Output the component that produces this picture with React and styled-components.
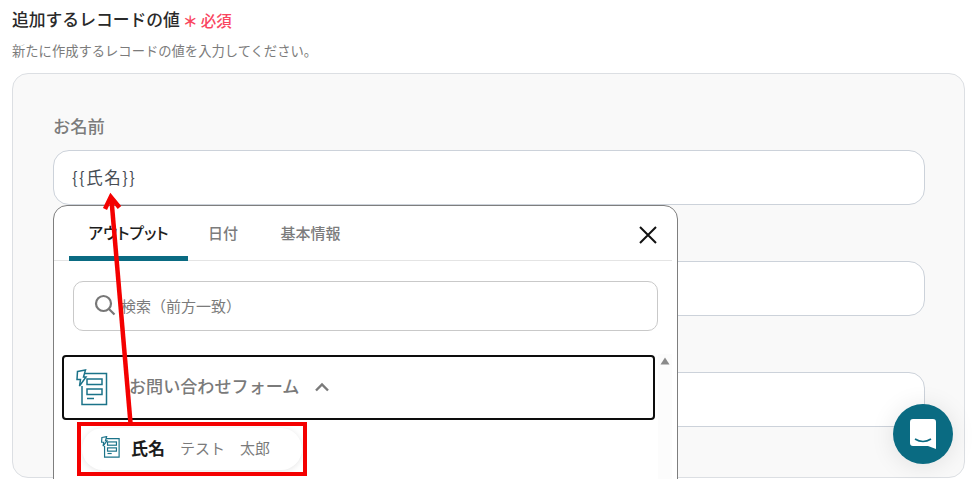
import React from "react";
import styled, { createGlobalStyle } from "styled-components";

const Global = createGlobalStyle`
  html, body { margin: 0; padding: 0; background: #fff; overflow: hidden; }
  body { font-family: "Noto Sans CJK JP", "Noto Sans", sans-serif; width: 972px; height: 479px; }
`;
const Page = styled.div`
  position: relative; width: 972px; height: 479px; overflow: hidden; padding: 0 7px 0 12px; box-sizing: border-box;
`;
const Heading = styled.div`
  display: flex; align-items: center; height: 24px; margin-top: 7px; gap: 3px;
`;
const Title = styled.h2`
  margin: 0; font-size: 16.8px; font-weight: 500; color: #2a2a2a; line-height: 24px;
`;
const Star = styled.span`
  color: #f9465f; font-size: 15px; line-height: 24px; font-weight: 700; margin-top: 3px;
`;
const Required = styled.span`
  color: #f9465f; font-size: 15.5px; font-weight: 500; margin-top: 1px;
`;
const Sub = styled.p`
  margin: 11px 0 0; font-size: 13.3px; line-height: 18px; color: #7b7b7b;
`;
const Card = styled.div`
  margin-top: 13px; height: 405px; box-sizing: border-box; background: #f9f9f9; border: 1px solid #dcdfe3; border-radius: 16px;
  padding: 41px 40px 0; display: flex; flex-direction: column; width: 953px;
`;
const Field = styled.div`
  display: flex; flex-direction: column; height: 111px;
`;
const Label = styled.label`
  font-size: 17.3px; font-weight: 500; color: #7c7c7c; line-height: 22px; height: 35px;
`;
const Input = styled.div`
  box-sizing: border-box; width: 872px; height: 55px; border: 1px solid #ccd2da; border-radius: 16px; background: #fff;
  padding: 0 18px 2px; display: flex; align-items: center; font-size: 16.5px; letter-spacing: 1.5px; color: #474d55;
`;
const Popup = styled.div`
  position: absolute; left: 53px; top: 205px; width: 625px; height: 290px; box-sizing: border-box; background: #fff;
  border: 1px solid #7e7e7e; border-radius: 14px; display: flex; flex-direction: column;
`;
const TabBar = styled.div`
  display: flex; align-items: stretch; height: 54px; margin: 0 5px 0 0; border-bottom: 1px solid #e4e4e4; padding-left: 15px; position: relative;
`;
const Tab = styled.div`
  width: ${p => p.$w}px; margin-right: ${p => p.$m}px; box-sizing: border-box; display: flex; justify-content: center; align-items: center;
  font-size: ${p => p.$active ? 15.8 : 15}px; font-weight: 500; padding-top: 3px; white-space: nowrap;
  font-feature-settings: "palt";
  color: ${p => p.$active ? "#1d1d1d" : "#7c7c7c"};
  border-bottom: 5px solid ${p => p.$active ? "#0a6b82" : "transparent"};
  border-radius: 4px 4px 0 0;
  margin-bottom: -1px;
`;
const Close = styled.button`
  position: absolute; right: 14px; top: 19px; width: 20px; height: 20px; padding: 0; border: 0; background: none; display: flex;
`;
const Search = styled.div`
  box-sizing: border-box; margin: 20px 0 0 19px; width: 585px; height: 50px; border: 1px solid #c9c9c9; border-radius: 10px;
  display: flex; align-items: center; padding: 0 0 2px 20px; gap: 5px; font-size: 15px; color: #7b7b7b;
`;
const ListArea = styled.div`
  position: relative; margin-top: 24px; padding-left: 8px; flex: 1;
`;
const Group = styled.div`
  box-sizing: border-box; width: 593px; height: 65px; border: 2px solid #0d0d0d; border-radius: 4px; display: flex; align-items: center;
  padding-left: 12px; font-size: 17.1px; font-weight: 500; color: #7a7a7a;
`;
const GroupText = styled.span` margin: 0 15px 4px 21px; `;
const Chevron = styled.svg` margin-bottom: 2px; `;
const Track = styled.div`
  position: absolute; right: 5px; top: -1px; width: 14px; bottom: 0; background: #fcfcfc; display: flex; justify-content: center; padding-top: 3px;
`;
const Item = styled.div`
  box-sizing: border-box; margin: 8px 0 0 20px; width: 220px; height: 42px; border-radius: 21px; background: #fff; box-shadow: 0 1px 6px rgba(0,0,0,.1);
  display: flex; align-items: center; padding: 0 0 4px 19px;
`;
const ItemName = styled.span` font-size: 17px; font-weight: 700; color: #1c1c1c; margin-left: 11px; `;
const ItemValue = styled.span` font-size: 15px; color: #7b7b7b; margin-left: 15px; white-space: pre; `;
const Chat = styled.button`
  position: absolute; left: 893px; top: 404px; width: 60px; height: 60px; border-radius: 50%; border: 0; padding: 0; background: #0a6b82;
  display: flex; align-items: center; justify-content: center; box-shadow: 0 2px 24px rgba(0,0,0,.1);
`;
const Overlay = styled.svg`
  position: absolute; left: 0; top: 0; pointer-events: none;
`;
const Highlight = styled.div`
  position: absolute; left: 77px; top: 422px; width: 230px; height: 54px; box-sizing: border-box; border: 4px solid #f40000;
`;

const FormIcon = ({ size, sw = 1.5 }) => (
  <svg width={size} height={size * 37 / 32} viewBox="0 0 32 37" fill="none" stroke="#1b7389" strokeWidth={sw}>
    <path d="M6 4.5H30.5V35.5H6V17" />
    <path d="M1.5 2.5L9.5 1 7.5 8 10 8 3.5 17 4.5 10.5 1 10.5Z" fill="#fff" />
    <rect x="11" y="10" width="15" height="5.5" />
    <rect x="11" y="20" width="15" height="5.5" />
    <path d="M11 29.5H18" />
  </svg>
);

const FieldRow = ({ label, value }) => (
  <Field>
    <Label>{label}</Label>
    <Input>{value}</Input>
  </Field>
);

export default function App() {
  return (
    <Page>
      <Global />
      <Heading>
        <Title>追加するレコードの値</Title>
        <Star>＊</Star>
        <Required>必須</Required>
      </Heading>
      <Sub>新たに作成するレコードの値を入力してください。</Sub>
      <Card>
        <FieldRow label="お名前" value="{{氏名}}" />
        <FieldRow label="" value="" />
        <FieldRow label="" value="" />
      </Card>
      <Popup>
        <TabBar>
          <Tab $active $w={119} $m={20}>アウトプット</Tab>
          <Tab $w={30} $m={42}>日付</Tab>
          <Tab $w={61} $m={0}>基本情報</Tab>
          <Close aria-label="閉じる">
            <svg width="20" height="20" viewBox="0 0 20 20" stroke="#111" strokeWidth="2" fill="none">
              <path d="M2 2L18 18M18 2L2 18" />
            </svg>
          </Close>
        </TabBar>
        <Search>
          <svg width="22" height="22" viewBox="0 0 22 22" fill="none" stroke="#777" strokeWidth="2.2">
            <circle cx="9.5" cy="9.5" r="7.5" />
            <path d="M15 15L20.5 20.5" />
          </svg>
          検索（前方一致）
        </Search>
        <ListArea>
          <Group>
            <FormIcon size={32} sw={1.5} />
            <GroupText>お問い合わせフォーム</GroupText>
            <Chevron width="16" height="10" viewBox="0 0 16 10" fill="none" stroke="#7a7a7a" strokeWidth="2.4">
              <path d="M2 8.5L8 2.5 14 8.5" />
            </Chevron>
          </Group>
          <Track>
            <svg width="10" height="8" viewBox="0 0 10 8"><path d="M5 0.5L9.5 7.5H0.5Z" fill="#8a8a8a" /></svg>
          </Track>
          <Item>
            <FormIcon size={19} sw={2} />
            <ItemName>氏名</ItemName>
            <ItemValue>テスト　太郎</ItemValue>
          </Item>
        </ListArea>
      </Popup>
      <Highlight />
      <Overlay width="972" height="479" viewBox="0 0 972 479">
        <path d="M130.5 423L111.5 200" stroke="#f40000" strokeWidth="4.5" fill="none" />
        <path d="M105 209L110.8 197L119.5 207.5" stroke="#f40000" strokeWidth="4.5" fill="none" />
      </Overlay>
      <Chat aria-label="チャット">
        <svg width="28" height="31" viewBox="0 0 28 31">
          <path d="M4 0H24A3 3 0 0 1 27 3V30L19 27H4A3 3 0 0 1 1 24V3A3 3 0 0 1 4 0Z" fill="#fff" />
          <path d="M6 20Q14 25 22 20" stroke="#0a6b82" strokeWidth="1.6" fill="none" />
        </svg>
      </Chat>
    </Page>
  );
}
